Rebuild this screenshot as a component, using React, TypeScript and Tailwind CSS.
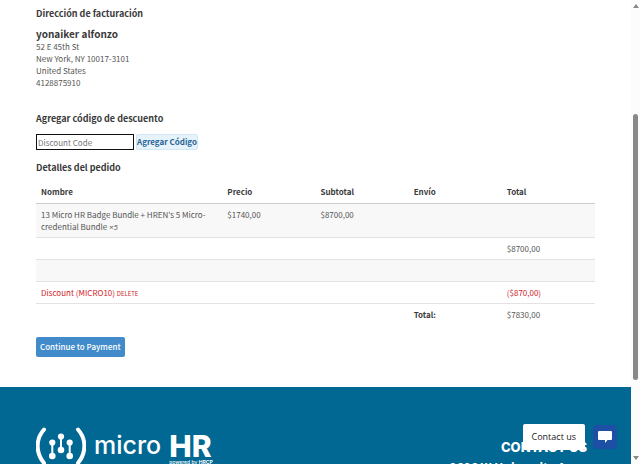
import { useState } from 'react';

const columns = ["Nombre", "Precio", "Subtotal", "Envío", "Total"];

function LogoMark() {
    return (
        <svg viewBox="0 0 50 38" className="h-[38px] w-[50px] shrink-0" fill="none" stroke="white" aria-hidden="true">
            <path d="M8 2.500 C-0.500 12 -0.500 26 8 36" strokeWidth="4" strokeLinecap="round" />
            <path d="M42 2.500 C50.500 12 50.500 26 42 36" strokeWidth="4" strokeLinecap="round" />
            <path d="M16.300 16 V29 M25 10 V23 M33.700 16 V29" strokeWidth="2" />
            <g fill="white" stroke="none">
                <circle cx="16.300" cy="15.500" r="3.100" />
                <circle cx="16.300" cy="29" r="3.300" />
                <circle cx="25" cy="9.500" r="3.100" />
                <circle cx="25" cy="23" r="3.300" />
                <circle cx="33.700" cy="15.500" r="3.100" />
                <circle cx="33.700" cy="29" r="3.300" />
            </g>
        </svg>
    );
}

function Address() {
    return (
        <section>
            <h2 className="text-[9px] leading-3 font-bold mb-2">Dirección de facturación</h2>
            <h3 className="text-[10px] leading-3 font-bold mb-px">yonaiker alfonzo</h3>
            <address className="not-italic text-[8px] leading-3 text-[#555]">
                52 E 45th St<br />
                New York, NY 10017-3101<br />
                United States<br />
                4128875910
            </address>
        </section>
    );
}

function DiscountForm() {
    const [code, setCode] = useState("");

    return (
        <form className="mt-6" onSubmit={(e) => e.preventDefault()}>
            <label htmlFor="discount" className="block text-[9px] leading-3 font-bold mb-[9px]">Agregar código de descuento</label>
            <div className="flex gap-[2px]">
                <input
                    id="discount"
                    className="w-[98px] h-4 px-px border border-[#111] bg-white text-[8px] leading-3 placeholder:text-[#757575]"
                    placeholder="Discount Code"
                    value={code}
                    onChange={(e) => setCode(e.target.value)}
                />
                <button type="submit" className="h-4 border border-[#d3e8f5] rounded-xs bg-[#e6f3fb] text-[8px] leading-3 font-bold text-[#2a6496]">
                    Agregar Código
                </button>
            </div>
        </form>
    );
}

function OrderTable() {
    return (
        <section className="mt-3">
            <h2 className="text-[9px] leading-3 font-bold mb-[6px]">Detalles del pedido</h2>
            <table className="w-full table-fixed text-left text-[8px] leading-3 text-[#555] [&_td]:px-[5px] [&_td]:pt-[5px] [&_td]:pb-1 [&_td]:align-top [&_th]:px-[5px] [&_th]:pt-[5px] [&_th]:pb-1">
                <thead>
                    <tr className="h-[23px] border-b border-[#ccc] text-[#3a3a3a]">
                        {columns.map((name, i) => (
                            <th key={name} className={i === 0 ? "w-1/3" : "w-1/6"}>{name}</th>
                        ))}
                    </tr>
                </thead>
                <tbody>
                    <tr className="bg-[#f8f8f8]">
                        <td>13 Micro HR Badge Bundle + HREN's 5 Micro-credential Bundle <em className="font-['Open_Sans']">×5</em></td>
                        <td>$1740,00</td>
                        <td>$8700,00</td>
                        <td></td>
                        <td></td>
                    </tr>
                    <tr className="border-t border-[#e3e3e3]">
                        <td colSpan={4}></td>
                        <td>$8700,00</td>
                    </tr>
                    <tr className="h-[22px] border-t border-[#e3e3e3] bg-[#f8f8f8]">
                        <td colSpan={5}></td>
                    </tr>
                    <tr className="border-t border-[#e3e3e3] text-[#d1232a]">
                        <td colSpan={4}>
                            Discount (MICRO10) <button className="text-[6px] leading-none uppercase">Delete</button>
                        </td>
                        <td>($870,00)</td>
                    </tr>
                    <tr className="border-t border-[#e3e3e3]">
                        <td colSpan={3}></td>
                        <th scope="row" className="text-[#3a3a3a]">Total:</th>
                        <td>$7830,00</td>
                    </tr>
                </tbody>
            </table>
        </section>
    );
}

function Footer() {
    return (
        <footer className="bg-[#006892] text-white px-9 pt-10 flex items-start justify-between">
            <div className="flex items-start">
                <LogoMark />
                <span className="ml-2 mt-1 font-['Inter'] text-[25px] leading-7 font-medium">micro</span>
                <div className="ml-2 mt-[7px] font-['Inter']">
                    <div className="text-[30px] leading-6 font-extrabold">HR</div>
                    <div className="text-[5px] leading-2 font-medium">powered by <b>HRCP</b></div>
                </div>
            </div>
            <div className="mt-3 flex flex-col items-end font-bold">
                <h2 className="mr-2 font-['Inter'] text-[13px] leading-4 font-extrabold">CONTACT US</h2>
                <p className="mt-1 mr-4 text-[12px] leading-4 whitespace-nowrap">9696 W University Ave</p>
            </div>
        </footer>
    );
}

function ContactWidget() {
    return (
        <div className="absolute right-[23px] bottom-[14px] flex items-center gap-2">
            <span className="rounded-xs bg-white px-[9px] py-1 font-['Open_Sans'] text-[9px] leading-[18px] text-[#222]">Contact us</span>
            <button aria-label="Contact us" className="flex size-6 items-center justify-center rounded-sm bg-[#1d4fa5]">
                <svg viewBox="0 0 14 12" className="h-3 w-[14px]" fill="white" aria-hidden="true">
                    <path d="M1 0h12q1 0 1 1v7q0 1-1 1H9.500L7 12V9H1Q0 9 0 8V1Q0 0 1 0z" />
                </svg>
            </button>
        </div>
    );
}

function Scrollbar() {
    return (
        <div className="w-[9px] shrink-0 bg-[#fcfcfc] flex flex-col items-center py-1" aria-hidden="true">
            <svg viewBox="0 0 6 4" className="h-1 w-[6px]" fill="#888"><path d="M3 0L6 4H0z" /></svg>
            <div className="flex-[106]"></div>
            <div className="w-[5px] flex-[266] rounded-full bg-[#888]"></div>
            <div className="flex-[76]"></div>
            <svg viewBox="0 0 6 4" className="h-1 w-[6px]" fill="#888"><path d="M0 0H6L3 4z" /></svg>
        </div>
    );
}

export default function App() {
    return (
        <div className="relative flex h-screen overflow-hidden bg-white font-['Noto_Sans_CJK_SC',sans-serif] text-[#3a3a3a]">
            <div className="flex-1 min-w-0">
                <main className="px-9 pt-2 pb-[30px]">
                    <Address />
                    <DiscountForm />
                    <OrderTable />
                    <button className="mt-3 block rounded-xs bg-[#428bca] px-1 py-1 text-[8px] leading-3 font-medium text-white">
                        Continue to Payment
                    </button>
                </main>
                <Footer />
            </div>
            <Scrollbar />
            <ContactWidget />
        </div>
    );
}
